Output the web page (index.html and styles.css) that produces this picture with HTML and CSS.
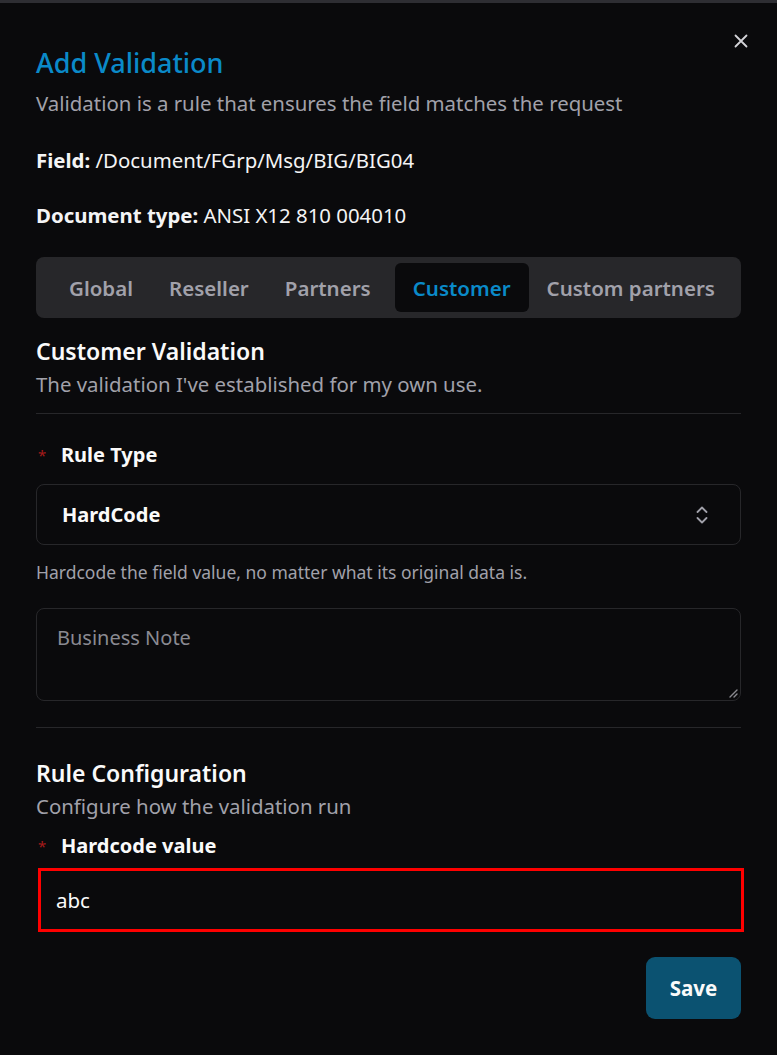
FILE: index.html
```html
<!DOCTYPE html>
<html>
<head>
<meta charset="utf-8">
<link rel="stylesheet" href="styles.css">
</head>
<body>
<div class="topbar"></div>
<div class="dialog">
  <button class="close" aria-label="Close">
    <svg width="14" height="14" viewBox="0 0 14 14"><path d="M1.5 1.5 L12.5 12.5 M12.5 1.5 L1.5 12.5" stroke="#d4d4d8" stroke-width="1.8" stroke-linecap="round"/></svg>
  </button>
  <h1 class="title">Add Validation</h1>
  <p class="subtitle">Validation is a rule that ensures the field matches the request</p>
  <p class="meta meta-field"><b>Field:</b> /Document/FGrp/Msg/BIG/BIG04</p>
  <p class="meta meta-doc"><b>Document type:</b> ANSI X12 810 004010</p>

  <div class="tabs">
    <div class="tab">Global</div>
    <div class="tab">Reseller</div>
    <div class="tab">Partners</div>
    <div class="tab active">Customer</div>
    <div class="tab">Custom partners</div>
  </div>

  <h2 class="section-title">Customer Validation</h2>
  <p class="section-desc">The validation I've established for my own use.</p>
  <div class="divider"></div>

  <label class="label label-rule"><span class="req">*</span>Rule Type</label>
  <div class="select">
    <span class="select-value">HardCode</span>
    <svg class="chev" width="14" height="22" viewBox="0 0 14 22"><path d="M2.5 8 L7 3.5 L11.5 8 M2.5 14 L7 18.5 L11.5 14" fill="none" stroke="#a1a1aa" stroke-width="1.8" stroke-linecap="round" stroke-linejoin="round"/></svg>
  </div>
  <p class="help">Hardcode the field value, no matter what its original data is.</p>
  <div class="textarea">
    <span class="placeholder">Business Note</span>
    <svg class="grip" width="10" height="10" viewBox="0 0 10 10"><path d="M9 2 L2 9 M9 6 L6 9" stroke="#8a8a90" stroke-width="1.4" stroke-linecap="round"/></svg>
  </div>
  <div class="divider divider-2"></div>

  <h2 class="section-title section-title-2">Rule Configuration</h2>
  <p class="section-desc">Configure how the validation run</p>
  <label class="label label-value"><span class="req">*</span>Hardcode value</label>
  <div class="input">abc</div>

  <div class="actions">
    <button class="save">Save</button>
  </div>
</div>
</body>
</html>
```

FILE: styles.css
```css
* { box-sizing: border-box; }
html, body {
  margin: 0;
  padding: 0;
  background: #0a0a0c;
  font-family: "Noto Sans", "Open Sans", sans-serif;
  color: #f4f4f5;
}
.topbar {
  height: 3px;
  background: #2e2e33;
}
.dialog {
  position: relative;
  padding: 44px 36px 30px 36px;
}
.close {
  position: absolute;
  top: 31px;
  right: 29px;
  background: none;
  border: 0;
  padding: 0;
  width: 14px;
  height: 14px;
  display: flex;
}
.title {
  margin: 0;
  font-size: 27px;
  line-height: 32px;
  font-weight: 500;
  color: #0a8ac9;
}
.subtitle {
  margin: 11px 0 0;
  font-size: 20.4px;
  line-height: 26px;
  color: #a1a1aa;
}
.meta {
  margin: 31px 0 0;
  font-size: 20.4px;
  line-height: 26px;
  color: #f4f4f5;
}
.meta b { font-weight: 700; }
.meta-doc { margin-top: 29px; }

.tabs {
  margin-top: 29px;
  background: #27272a;
  border-radius: 8px;
  height: 61px;
  padding: 6px 8px 6px 15px;
  display: flex;
  align-items: stretch;
  justify-content: space-between;
}
.tab {
  display: flex;
  align-items: center;
  justify-content: center;
  padding: 0 18px;
  font-size: 20.5px;
  font-weight: 600;
  color: #a1a1aa;
  border-radius: 6px;
}
.tab.active {
  background: #0a0a0c;
  color: #0a8ac9;
  margin-left: 6px;
}

.section-title {
  margin: 19px 0 0;
  font-size: 23px;
  line-height: 28px;
  font-weight: 600;
  color: #fafafa;
}
.section-desc {
  margin: 6px 0 0;
  font-size: 20.4px;
  line-height: 26px;
  color: #a1a1aa;
}
.divider {
  height: 1px;
  background: #27272a;
  margin-top: 16px;
}
.divider-2 { margin-top: 26px; }

.label {
  display: flex;
  align-items: center;
  margin-top: 28px;
  font-size: 20px;
  line-height: 26px;
  font-weight: 700;
  color: #fafafa;
}
.req {
  color: #a61b1b;
  font-size: 15px;
  font-weight: 400;
  width: 25px;
  padding-left: 2px;
}
.select {
  margin-top: 16px;
  height: 61px;
  border: 1.5px solid #27272a;
  border-radius: 8px;
  display: flex;
  align-items: center;
  justify-content: space-between;
  padding: 0 31px 0 25px;
}
.select-value {
  font-size: 20px;
  font-weight: 700;
  color: #fafafa;
}
.help {
  margin: 16px 0 0;
  font-size: 17.5px;
  line-height: 22px;
  color: #a1a1aa;
}
.textarea {
  position: relative;
  margin-top: 25px;
  height: 93px;
  border: 1.5px solid #27272a;
  border-radius: 8px;
  padding: 16px 20px;
}
.placeholder {
  font-size: 20px;
  line-height: 26px;
  color: #8a8a92;
}
.grip {
  position: absolute;
  right: 2px;
  bottom: 2px;
}
.section-title-2 { margin-top: 31px; }
.label-value { margin-top: 14px; }
.input {
  margin: 9px -3px 0 2px;
  height: 64px;
  border: 3px solid #ff0000;
  display: flex;
  align-items: center;
  padding: 0 15px;
  font-size: 20.5px;
  color: #fafafa;
}
.actions {
  display: flex;
  justify-content: flex-end;
  margin-top: 25px;
}
.save {
  width: 95px;
  height: 62px;
  border: 0;
  border-radius: 9px;
  background: #0b5271;
  color: #fafafa;
  font-family: inherit;
  font-size: 20.5px;
  font-weight: 700;
}
```
